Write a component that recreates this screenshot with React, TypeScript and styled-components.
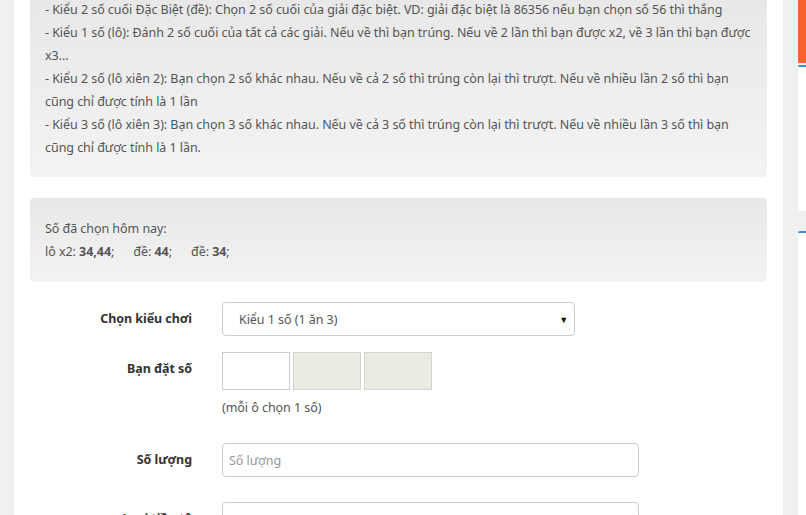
import React from "react";
import styled, { createGlobalStyle } from "styled-components";

const Global = createGlobalStyle`
  html, body { margin: 0; padding: 0; background: #f0f0f0; overflow: hidden; }
  body { font-family: "Noto Sans", "Open Sans", sans-serif; font-size: 12.5px; letter-spacing: -0.05px; color: #555; }
  * { box-sizing: border-box; }
`;

const Page = styled.div`
  display: flex;
  align-items: flex-start;
  width: 806px;
  height: 515px;
  overflow: hidden;
  padding-left: 14px;
  gap: 15px;
`;

const Main = styled.main`
  flex: 0 0 769px;
  background: #fff;
  padding: 0 16px 40px;
  min-height: 515px;
`;

const Sidebar = styled.aside`
  flex: 0 0 120px;
  display: flex;
  flex-direction: column;
`;

const OrangeHead = styled.div`
  height: 63px;
  background: #f7612c;
`;

const Widget = styled.div<{ $h: number; $gapTop: number }>`
  margin-top: ${(p) => p.$gapTop}px;
  height: ${(p) => p.$h}px;
  background: #fff;
  border-top: 2px solid #3a8dd6;
  border-top-left-radius: 2px;
`;

const InfoBox = styled.div<{ $pt: number; $pb: number; $mt: number }>`
  margin-top: ${(p) => p.$mt}px;
  padding: ${(p) => p.$pt}px 15px ${(p) => p.$pb}px;
  background: linear-gradient(to bottom, #e8e8e8, #f3f3f3);
  border-radius: 0 0 4px 4px;
  line-height: 23px;
  color: #555;
  &.rounded { border-radius: 4px; }
`;

const Line = styled.div``;

const Gap = styled.span`
  display: inline-block;
  width: 19px;
`;

const Form = styled.form`
  margin-top: 20px;
  display: flex;
  flex-direction: column;
`;

const Row = styled.div<{ $mb: number }>`
  display: flex;
  align-items: flex-start;
  gap: 30px;
  margin-bottom: ${(p) => p.$mb}px;
`;

const Label = styled.label`
  flex: 0 0 162px;
  text-align: right;
  padding-top: 8px;
  font-weight: 700;
  color: #333;
  line-height: 18px;
`;

const Field = styled.div`
  display: flex;
  flex-direction: column;
`;

const SelectBox = styled.div`
  position: relative;
  width: 353px;
  height: 34px;
  border: 1px solid #ccc;
  border-radius: 4px;
  padding: 0 16px;
  display: flex;
  align-items: center;
  color: #555;
`;

const Caret = styled.span`
  position: absolute;
  right: 6px;
  top: 50%;
  transform: translateY(-50%);
  font-size: 9px;
  color: #111;
`;

const Digits = styled.div`
  display: flex;
  gap: 3px;
`;

const DigitBox = styled.div<{ $disabled?: boolean }>`
  width: 68px;
  height: 38px;
  border: 1px solid ${(p) => (p.$disabled ? "#d4d4cf" : "#ccc")};
  background: ${(p) => (p.$disabled ? "#ebebe4" : "#fff")};
`;

const Hint = styled.div`
  margin-top: 9px;
  line-height: 18px;
  color: #555;
`;

const TextInput = styled.div`
  width: 417px;
  height: 34px;
  border: 1px solid #ccc;
  border-radius: 4px;
  padding: 0 6px;
  display: flex;
  align-items: center;
  color: #999;
`;

export default function App() {
  return (
    <>
      <Global />
      <Page>
        <Main>
          <InfoBox $mt={-2} $pt={0} $pb={18}>
            <Line>- Kiểu 2 số cuối Đặc Biệt (đề): Chọn 2 số cuối của giải đặc biệt. VD: giải đặc biệt là 86356 nếu bạn chọn số 56 thì thắng</Line>
            <Line>- Kiểu 1 số (lô): Đánh 2 số cuối của tất cả các giải. Nếu về thì bạn trúng. Nếu về 2 lần thì bạn được x2, về 3 lần thì bạn được x3...</Line>
            <Line>- Kiểu 2 số (lô xiên 2): Bạn chọn 2 số khác nhau. Nếu về cả 2 số thì trúng còn lại thì trượt. Nếu về nhiều lần 2 số thì bạn cũng chỉ được tính là 1 lần</Line>
            <Line>- Kiểu 3 số (lô xiên 3): Bạn chọn 3 số khác nhau. Nếu về cả 3 số thì trúng còn lại thì trượt. Nếu về nhiều lần 3 số thì bạn cũng chỉ được tính là 1 lần.</Line>
          </InfoBox>
          <InfoBox className="rounded" $mt={21} $pt={19} $pb={19}>
            <Line>Số đã chọn hôm nay:</Line>
            <Line>
              lô x2: <b>34,44</b>;<Gap />đề: <b>44</b>;<Gap />đề: <b>34</b>;
            </Line>
          </InfoBox>
          <Form>
            <Row $mb={16}>
              <Label>Chọn kiểu chơi</Label>
              <SelectBox>
                Kiểu 1 số (1 ăn 3)
                <Caret>▼</Caret>
              </SelectBox>
            </Row>
            <Row $mb={26}>
              <Label>Bạn đặt số</Label>
              <Field>
                <Digits>
                  <DigitBox />
                  <DigitBox $disabled />
                  <DigitBox $disabled />
                </Digits>
                <Hint>(mỗi ô chọn 1 số)</Hint>
              </Field>
            </Row>
            <Row $mb={25}>
              <Label>Số lượng</Label>
              <TextInput>Số lượng</TextInput>
            </Row>
            <Row $mb={25}>
              <Label>Loại tiền tệ</Label>
              <TextInput />
            </Row>
          </Form>
        </Main>
        <Sidebar>
          <OrangeHead />
          <Widget $gapTop={2} $h={146} />
          <Widget $gapTop={20} $h={300} />
        </Sidebar>
      </Page>
    </>
  );
}
